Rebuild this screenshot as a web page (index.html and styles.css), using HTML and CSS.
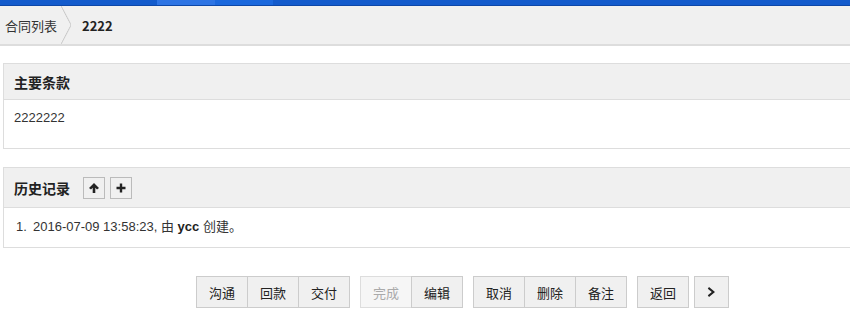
FILE: index.html
```html
<!DOCTYPE html>
<html lang="zh-CN">
<head>
    <meta charset="UTF-8">
    <title>合同详情</title>
    <link rel="stylesheet" href="styles.css">
</head>
<body>
    <div class="topbar">
        <span class="tab tab-a"></span>
        <span class="tab tab-b"></span>
    </div>
    <div class="crumbs">
        <a class="crumb">合同列表</a>
        <span class="sep"></span>
        <span class="crumb current">2222</span>
    </div>

    <div class="panel first">
        <div class="panel-head">主要条款</div>
        <div class="panel-body">2222222</div>
    </div>

    <div class="panel second">
        <div class="panel-head">
            历史记录
            <button class="mini">
                <svg width="12" height="12" viewBox="0 0 12 12"><path d="M6 1 L11 6 L9 7.5 L7.3 5.8 V11 H4.7 V5.8 L3 7.5 L1 6 Z" fill="#222"/></svg>
            </button>
            <button class="mini">
                <svg width="12" height="12" viewBox="0 0 12 12"><path d="M4.8 1.5 H7.2 V4.8 H10.5 V7.2 H7.2 V10.5 H4.8 V7.2 H1.5 V4.8 H4.8 Z" fill="#222"/></svg>
            </button>
        </div>
        <div class="panel-body">
            <ol class="history">
                <li>2016-07-09 13:58:23, 由 <b>ycc</b> 创建。</li>
            </ol>
        </div>
    </div>

    <div class="actions">
        <div class="group">
            <button class="btn">沟通</button>
            <button class="btn">回款</button>
            <button class="btn">交付</button>
        </div>
        <div class="group">
            <button class="btn" disabled>完成</button>
            <button class="btn">编辑</button>
        </div>
        <div class="group">
            <button class="btn">取消</button>
            <button class="btn">删除</button>
            <button class="btn">备注</button>
        </div>
        <div class="group">
            <button class="btn">返回</button>
        </div>
        <div class="group narrow">
            <button class="btn next">
                <svg width="10" height="12" viewBox="0 0 10 12"><path d="M2 1 L8 6 L2 11 L0.8 9.3 L4.8 6 L0.8 2.7 Z" fill="#222"/></svg>
            </button>
        </div>
    </div>
</body>
</html>
```

FILE: styles.css
```css
body {
    margin: 0;
    background-color: #fff;
    font-family: "Liberation Sans", "Noto Sans CJK SC", sans-serif;
    font-size: 13px;
    color: #333;
    overflow: hidden;
}
.topbar {
    display: flex;
    height: 5px;
    padding-left: 157px;
    background-color: #135bcc;
    border-bottom: 1px solid #0d47a8;
}
.tab {
    width: 58px;
    height: 5px;
}
.tab-a {
    background-color: #2d74e4;
}
.tab-b {
    background-color: #1b68dd;
}
.crumbs {
    display: flex;
    align-items: center;
    height: 38px;
    background-color: #f0f0f0;
    border-bottom: 2px solid #ddd;
    font-family: "Noto Sans CJK SC", sans-serif;
}
.crumb {
    padding-left: 5px;
    color: #333;
}
.crumb.current {
    padding-left: 11px;
    font-weight: bold;
    color: #222;
}
.sep {
    width: 10px;
    height: 38px;
    margin-left: 4px;
    background: linear-gradient(to top right, transparent 46%, #c8c8c8 50%, transparent 56%) top / 10px 19px no-repeat,
                linear-gradient(to bottom right, transparent 46%, #c8c8c8 50%, transparent 56%) bottom / 10px 19px no-repeat;
}
.panel {
    margin: 18px -10px 0 3px;
    border: 1px solid #ddd;
    border-right: none;
}
.panel.first {
    margin-top: 17px;
}
.panel-head {
    display: flex;
    align-items: center;
    height: 35px;
    padding-left: 10px;
    background-color: #f0f0f0;
    border-bottom: 1px solid #ddd;
    font-family: "Noto Sans CJK SC", sans-serif;
    font-size: 14px;
    font-weight: bold;
    color: #222;
}
.second .panel-head {
    height: 39px;
}
.panel-body {
    height: 48px;
    padding-left: 10px;
    line-height: 35px;
}
.second .panel-body {
    height: 39px;
}
.history {
    margin: 0;
    padding-left: 2px;
    list-style: none;
    counter-reset: item;
    line-height: 38px;
    color: #333;
}
.history li::before {
    counter-increment: item;
    content: counter(item) ".";
    display: inline-block;
    width: 17px;
}
.history b {
    color: #222;
}
.mini {
    display: flex;
    align-items: center;
    justify-content: center;
    width: 22px;
    height: 22px;
    padding: 0;
    margin-left: 5px;
    border: 1px solid #bbb;
    background-color: #f0f0f0;
}
.mini:first-of-type {
    margin-left: 13px;
}
.actions {
    display: flex;
    justify-content: center;
    gap: 10px;
    margin-top: 28px;
    padding-left: 75px;
}
.group {
    display: flex;
}
.group.narrow {
    margin-left: -5px;
}
.btn {
    width: 52px;
    height: 32px;
    padding: 0;
    border: 1px solid #ccc;
    margin-left: -1px;
    background-color: #f0f0f0;
    font-family: "Noto Sans CJK SC", sans-serif;
    font-size: 13px;
    color: #222;
}
.btn:first-child {
    margin-left: 0;
}
.btn:disabled {
    color: #aaa;
    background-color: #f6f6f6;
    border-color: #ddd;
}
.next {
    width: 35px;
    display: flex;
    align-items: center;
    justify-content: center;
}
```
